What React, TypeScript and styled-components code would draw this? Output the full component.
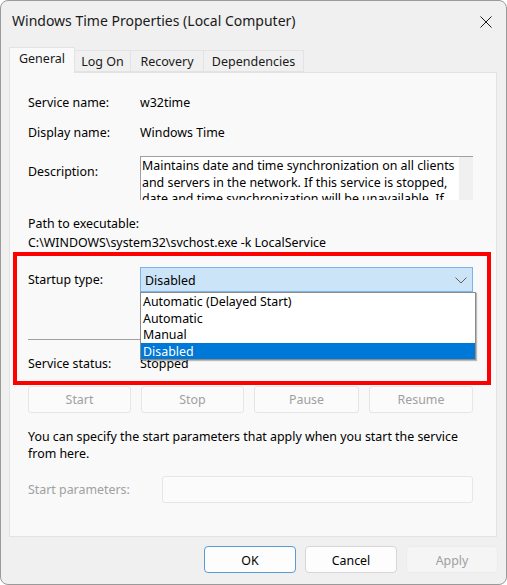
import React from "react";
import styled, { createGlobalStyle } from "styled-components";

const Global = createGlobalStyle`
  html, body { margin: 0; padding: 0; background: #ffffff; }
  body { width: 507px; height: 585px; overflow: hidden; font-family: "Noto Sans", "Segoe UI", sans-serif; }
  * { box-sizing: border-box; }
`;

const FS = "12.4px";

const Window = styled.div`
  width: 507px;
  height: 585px;
  background: #f0f0f0;
  border: 1px solid #9a9a9a;
  border-radius: 8px;
  display: flex;
  flex-direction: column;
  overflow: hidden;
  color: #000;
  font-size: ${FS};
`;

const TitleBar = styled.div`
  height: 46px;
  display: flex;
  align-items: flex-start;
  justify-content: space-between;
  padding: 10px 14px 0 11px;
`;

const Title = styled.div`
  font-size: 14px;
  line-height: 20px;
  color: #1a1a1a;
`;

const CloseBtn = styled.div`
  width: 12px;
  height: 12px;
  margin-top: 5px;
  display: flex;
`;

const TabStrip = styled.div`
  display: flex;
  align-items: flex-end;
  height: 25px;
  padding-left: 8px;
  position: relative;
  z-index: 1;
`;

const Tab = styled.div<{ $active?: boolean; $w: number }>`
  width: ${(p) => p.$w}px;
  height: ${(p) => (p.$active ? "26px" : "22px")};
  padding-bottom: ${(p) => (p.$active ? "4px" : "0")};
  margin-bottom: ${(p) => (p.$active ? "-1px" : "0")};
  display: flex;
  align-items: center;
  justify-content: center;
  background: ${(p) => (p.$active ? "#f9f9f9" : "#f0f0f0")};
  border: 1px solid #e3e3e3;
  border-bottom: ${(p) => (p.$active ? "none" : "1px solid #e3e3e3")};
  margin-left: ${(p) => (p.$active ? "0" : "-1px")};
  font-size: 12.5px;
  color: #1a1a1a;
  white-space: nowrap;
`;

const Panel = styled.div`
  margin: 0 9px 0 8px;
  height: 465px;
  background: #f9f9f9;
  border: 1px solid #e3e3e3;
  display: flex;
  flex-direction: column;
  position: relative;
`;

const Row = styled.div<{ $mt: number; $h: number }>`
  display: grid;
  grid-template-columns: 112px 1fr;
  align-items: center;
  margin: ${(p) => p.$mt}px 0 0 18px;
  height: ${(p) => p.$h}px;
  width: 445px;
  font-size: ${FS};
  line-height: 16px;
  padding-top: 1px;
  white-space: nowrap;
`;

const TopRow = styled(Row)`
  align-items: start;
  padding-top: 0;
`;

const LabelTop = styled.div`
  margin-top: 8px;
`;

const Plain = styled.div<{ $mt: number }>`
  margin: ${(p) => p.$mt}px 0 0 18px;
  font-size: ${FS};
  line-height: 16px;
  padding-top: 1px;
  white-space: nowrap;
`;

const DescBox = styled.div`
  height: 44px;
  width: 333px;
  background: #ffffff;
  border-top: 1px solid #a0a0a0;
  border-left: 1px solid #a0a0a0;
  display: flex;
  overflow: hidden;
`;

const DescText = styled.div`
  flex: 1;
  padding: 1px 0 0 1px;
  font-size: ${FS};
  line-height: 16.5px;
  white-space: normal;
`;

const Gutter = styled.div`
  width: 14px;
  background: #f0f0f0;
`;

const Highlight = styled.div`
  margin: 1px 0 0 3px;
  width: 478px;
  border: 4px solid #ff0000;
  padding: 11px 0 10px 11px;
  display: flex;
  flex-direction: column;
`;

const InnerRow = styled.div<{ $h: number; $mt?: number }>`
  display: grid;
  grid-template-columns: 112px 1fr;
  align-items: center;
  height: ${(p) => p.$h}px;
  margin-top: ${(p) => p.$mt || 0}px;
  width: 445px;
  font-size: ${FS};
  white-space: nowrap;
`;

const ComboWrap = styled.div`
  position: relative;
  width: 333px;
  height: 25px;
`;

const Combo = styled.div`
  height: 25px;
  width: 333px;
  background: #cce4f7;
  border: 1px solid #7db3e8;
  display: flex;
  align-items: center;
  justify-content: space-between;
  padding: 1px 5px 0 4px;
  font-size: ${FS};
`;

const ListBox = styled.div`
  position: absolute;
  top: 25px;
  left: 0;
  width: 336px;
  background: #ffffff;
  border: 1px solid #8c8c8c;
  box-shadow: 1px 1px 1px rgba(0, 0, 0, 0.25);
  z-index: 5;
  padding: 0;
`;

const Option = styled.div<{ $sel?: boolean }>`
  height: 16.6px;
  line-height: 17.5px;
  padding-left: 2px;
  font-size: ${FS};
  background: ${(p) => (p.$sel ? "#0078d7" : "transparent")};
  color: ${(p) => (p.$sel ? "#ffffff" : "#000000")};
`;

const Separator = styled.div`
  margin-top: 47px;
  height: 1px;
  width: 445px;
  background: #a0a0a0;
`;

const ButtonRow = styled.div`
  margin: 1px 0 0 18px;
  width: 445px;
  height: 27px;
  display: grid;
  grid-template-columns: 103px 103px 105px 104px;
  column-gap: 9px;
  justify-content: space-between;
`;

const DisabledBtn = styled.div`
  background: #fbfbfb;
  border: 1px solid #e6e6e6;
  border-radius: 3px;
  display: flex;
  align-items: center;
  justify-content: center;
  font-size: ${FS};
  color: #a0a0a0;
`;

const Para = styled.div`
  margin: 15px 0 0 18px;
  width: 460px;
  font-size: ${FS};
  line-height: 17px;
  white-space: nowrap;
`;

const ParamRow = styled.div`
  margin: 14px 0 0 18px;
  width: 445px;
  height: 27px;
  display: grid;
  grid-template-columns: 134px 1fr;
  align-items: center;
  font-size: ${FS};
  color: #a0a0a0;
  white-space: nowrap;
`;

const ParamInput = styled.div`
  height: 27px;
  background: #fbfbfb;
  border: 1px solid #e6e6e6;
  border-radius: 3px;
`;

const Footer = styled.div`
  flex: 1;
  display: flex;
  justify-content: flex-end;
  align-items: flex-start;
  gap: 9px;
  padding: 9px 8px 0 0;
`;

const DialogBtn = styled.div<{ $variant: "primary" | "normal" | "disabled" }>`
  width: 92px;
  height: 27px;
  border-radius: 4px;
  display: flex;
  align-items: center;
  justify-content: center;
  padding-top: 1px;
  font-size: ${FS};
  background: ${(p) => (p.$variant === "disabled" ? "#f5f5f5" : "#fdfdfd")};
  border: 1px solid
    ${(p) =>
      p.$variant === "primary" ? "#5b9bd5" : p.$variant === "normal" ? "#d6d6d6" : "#ececec"};
  color: ${(p) => (p.$variant === "disabled" ? "#a0a0a0" : "#000")};
`;

export default function App() {
  return (
    <>
      <Global />
      <Window>
        <TitleBar>
          <Title>Windows Time Properties (Local Computer)</Title>
          <CloseBtn>
            <svg width="12" height="12" viewBox="0 0 12 12">
              <path d="M0.5 0.5 L11.5 11.5 M11.5 0.5 L0.5 11.5" stroke="#1a1a1a" strokeWidth="1" fill="none" />
            </svg>
          </CloseBtn>
        </TitleBar>
        <TabStrip>
          <Tab $active $w={66}>General</Tab>
          <Tab $w={57}>Log On</Tab>
          <Tab $w={74}>Recovery</Tab>
          <Tab $w={101}>Dependencies</Tab>
        </TabStrip>
        <Panel>
          <Row $mt={21} $h={16}>
            <div>Service name:</div>
            <div>w32time</div>
          </Row>
          <Row $mt={14} $h={16}>
            <div>Display name:</div>
            <div>Windows Time</div>
          </Row>
          <TopRow $mt={16} $h={44}>
            <LabelTop>Description:</LabelTop>
            <DescBox>
              <DescText>
                Maintains date and time synchronization on all clients and servers in the network. If this
                service is stopped, date and time synchronization will be unavailable. If
              </DescText>
              <Gutter />
            </DescBox>
          </TopRow>
          <Plain $mt={15}>Path to executable:</Plain>
          <Plain $mt={2}>C:\WINDOWS\system32\svchost.exe -k LocalService</Plain>
          <Highlight>
            <InnerRow $h={25}>
              <div>Startup type:</div>
              <ComboWrap>
                <Combo>
                  <span>Disabled</span>
                  <svg width="12" height="7" viewBox="0 0 12 7">
                    <polyline points="0.5,0.5 6,6 11.5,0.5" stroke="#606060" strokeWidth="1" fill="none" />
                  </svg>
                </Combo>
                <ListBox>
                  <Option>Automatic (Delayed Start)</Option>
                  <Option>Automatic</Option>
                  <Option>Manual</Option>
                  <Option $sel>Disabled</Option>
                </ListBox>
              </ComboWrap>
            </InnerRow>
            <Separator />
            <InnerRow $h={16} $mt={15}>
              <div>Service status:</div>
              <div>Stopped</div>
            </InnerRow>
          </Highlight>
          <ButtonRow>
            <DisabledBtn>Start</DisabledBtn>
            <DisabledBtn>Stop</DisabledBtn>
            <DisabledBtn>Pause</DisabledBtn>
            <DisabledBtn>Resume</DisabledBtn>
          </ButtonRow>
          <Para>
            You can specify the start parameters that apply when you start the service
            <br />
            from here.
          </Para>
          <ParamRow>
            <div>Start parameters:</div>
            <ParamInput />
          </ParamRow>
        </Panel>
        <Footer>
          <DialogBtn $variant="primary">OK</DialogBtn>
          <DialogBtn $variant="normal">Cancel</DialogBtn>
          <DialogBtn $variant="disabled">Apply</DialogBtn>
        </Footer>
      </Window>
    </>
  );
}
